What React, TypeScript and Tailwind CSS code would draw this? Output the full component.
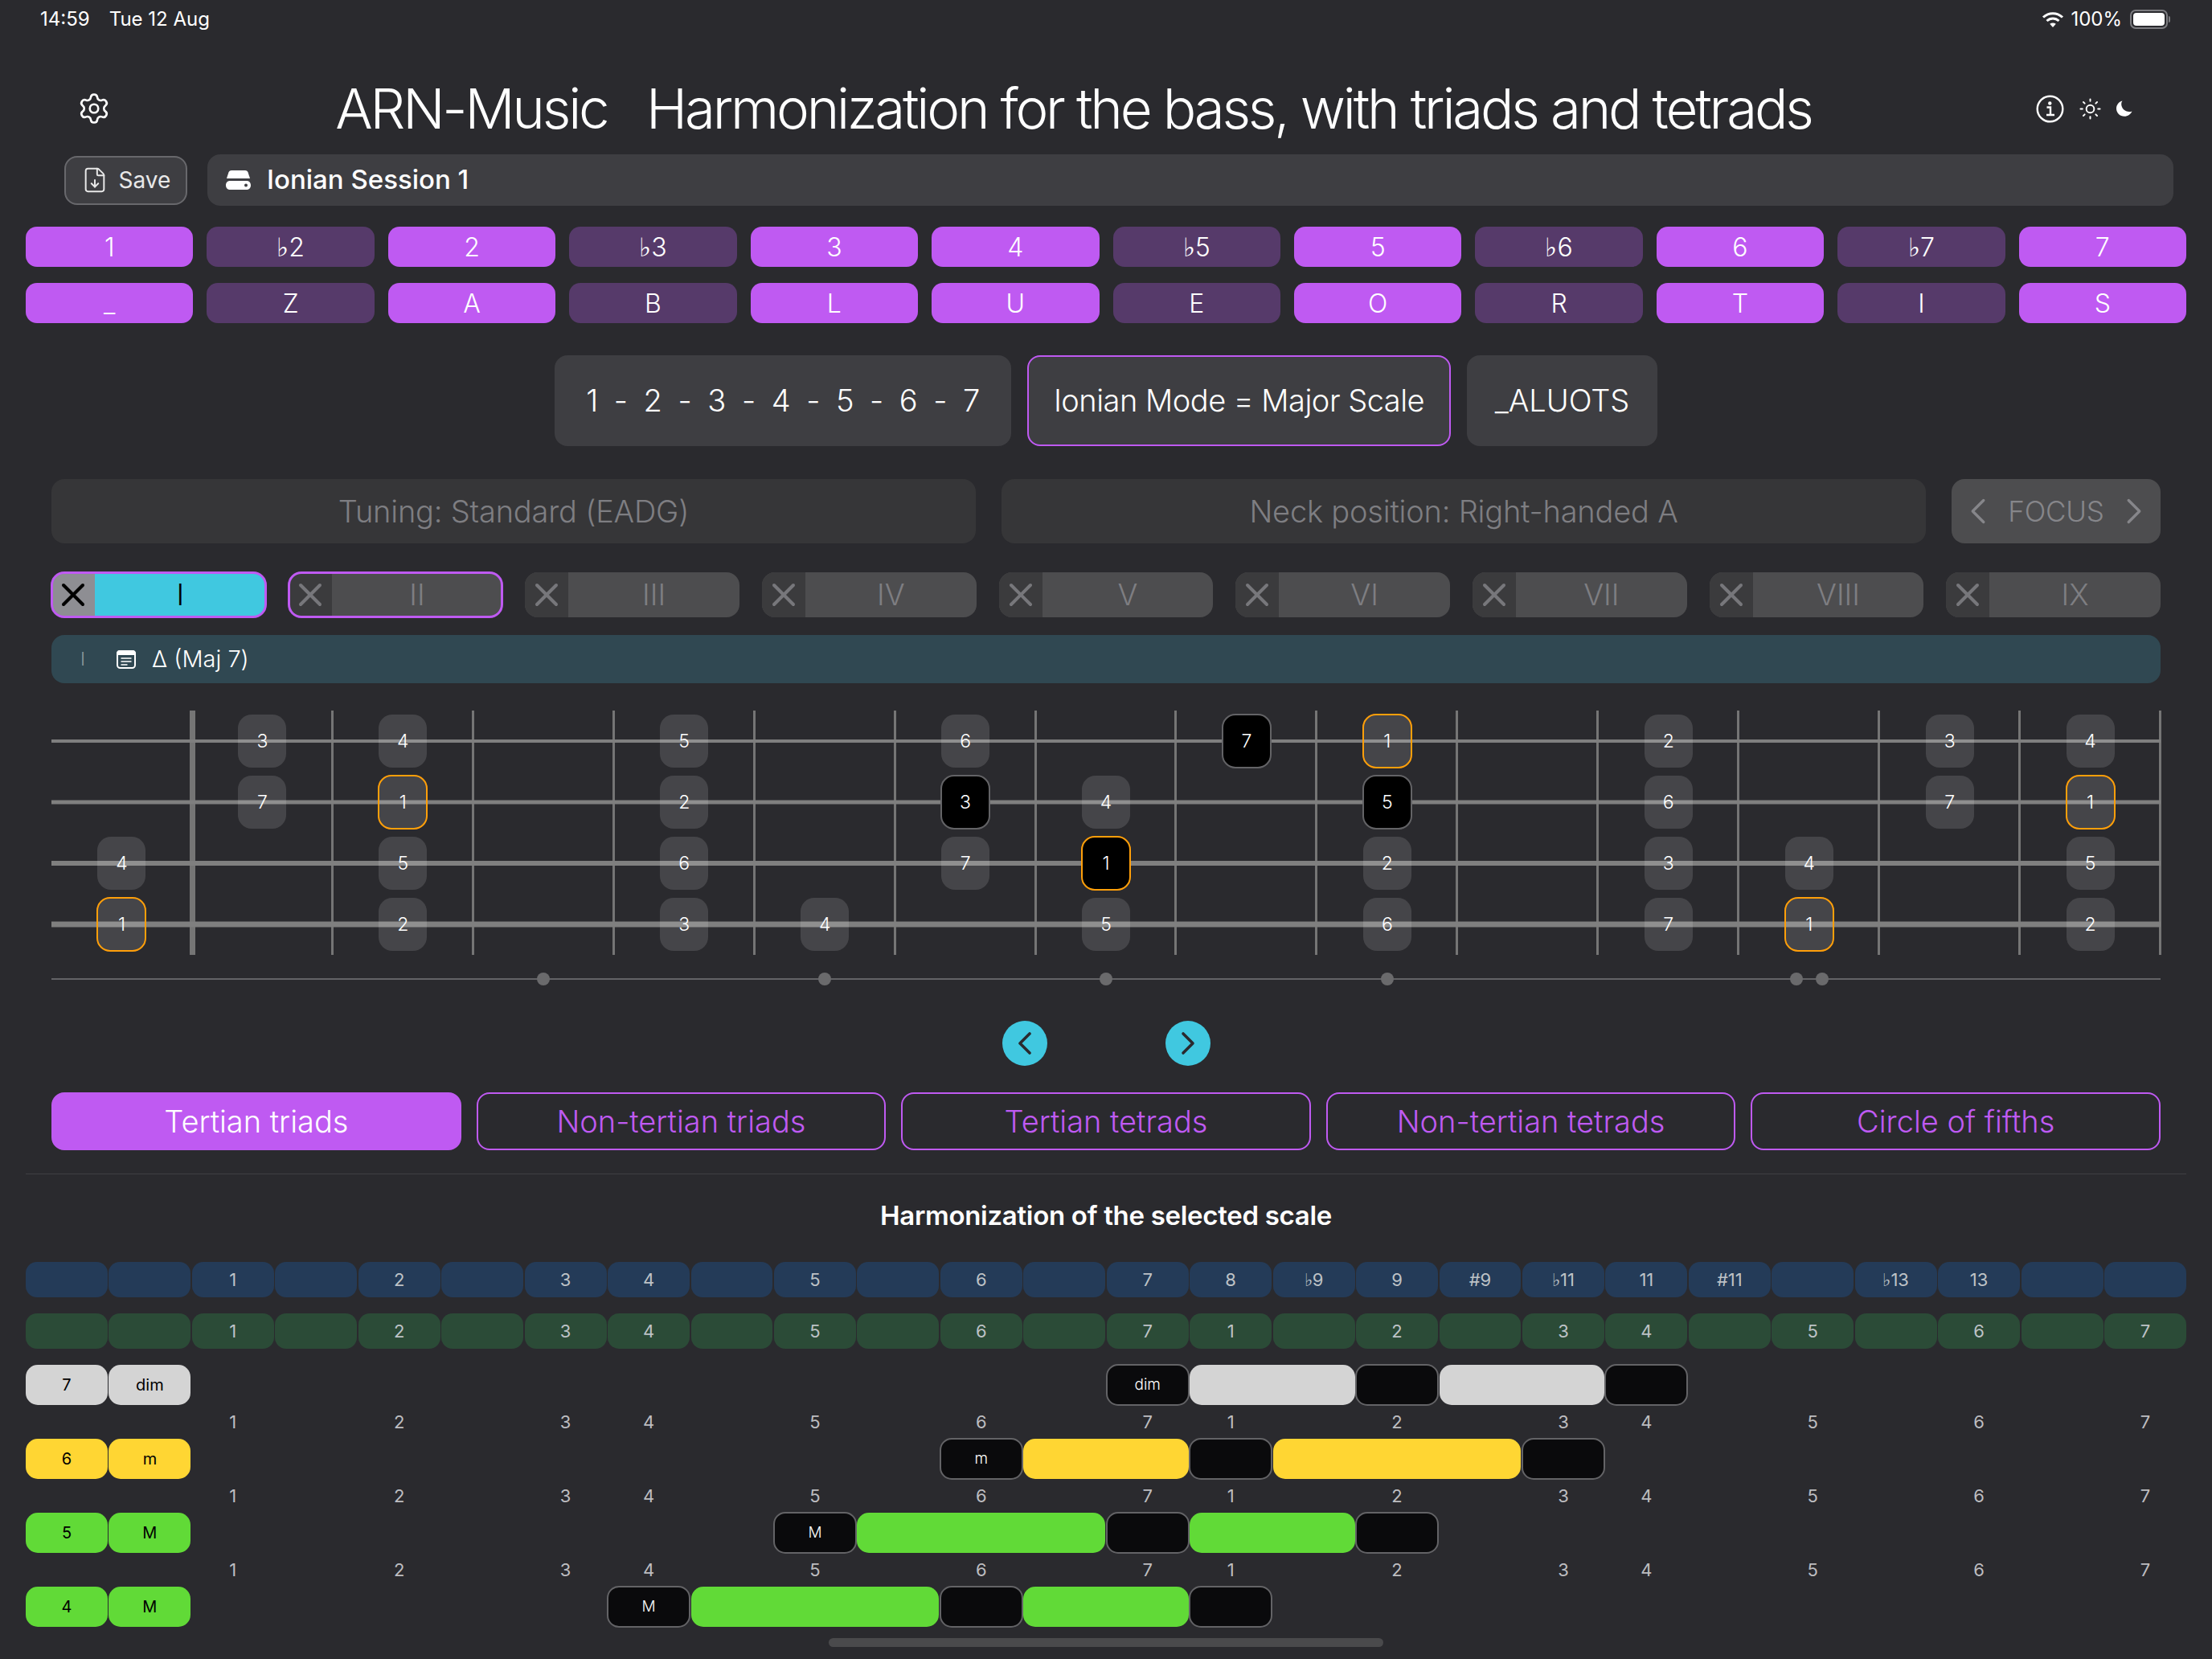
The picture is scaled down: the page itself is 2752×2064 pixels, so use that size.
import { ChevronLeft, ChevronRight, FileDown, Settings, Sun, X } from 'lucide-react';

const degrees = ['1', '♭2', '2', '♭3', '3', '4', '♭5', '5', '♭6', '6', '♭7', '7'];
const letters = ['_', 'Z', 'A', 'B', 'L', 'U', 'E', 'O', 'R', 'T', 'I', 'S'];
const inScale = [0, 2, 4, 5, 7, 9, 11];
const romans = ['I', 'II', 'III', 'IV', 'V', 'VI', 'VII', 'VIII', 'IX'];

type NoteKind = 'plain' | 'black' | 'root' | 'blackRoot';
type Note = [number, string, NoteKind?];

const strings: { line: string; notes: Note[] }[] = [
  {
    line: 'h-[4px]',
    notes: [[1, '3'], [2, '4'], [4, '5'], [6, '6'], [8, '7', 'black'], [9, '1', 'root'], [11, '2'], [13, '3'], [14, '4']],
  },
  {
    line: 'h-[5px]',
    notes: [[1, '7'], [2, '1', 'root'], [4, '2'], [6, '3', 'black'], [7, '4'], [9, '5', 'black'], [11, '6'], [13, '7'], [14, '1', 'root']],
  },
  {
    line: 'h-[6px]',
    notes: [[0, '4'], [2, '5'], [4, '6'], [6, '7'], [7, '1', 'blackRoot'], [9, '2'], [11, '3'], [12, '4'], [14, '5']],
  },
  {
    line: 'h-[7px]',
    notes: [[0, '1', 'root'], [2, '2'], [4, '3'], [5, '4'], [7, '5'], [9, '6'], [11, '7'], [12, '1', 'root'], [14, '2']],
  },
];

const noteClass: Record<NoteKind, string> = {
  plain: 'w-[60px] h-[66px] bg-[#ffffff21]',
  black: 'w-[62px] h-[68px] bg-black border-2 border-[#636366]',
  root: 'w-[62px] h-[68px] bg-[#ffffff21] border-[2.5px] border-[#ff9f0a]',
  blackRoot: 'w-[62px] h-[68px] bg-black border-[2.5px] border-[#ff9f0a]',
};

const harmonyTabs = ['Tertian triads', 'Non-tertian triads', 'Tertian tetrads', 'Non-tertian tetrads', 'Circle of fifths'];

const intervalRow: [number, string][] = [
  [2, '1'], [4, '2'], [6, '3'], [7, '4'], [9, '5'], [11, '6'], [13, '7'], [14, '8'], [15, '♭9'], [16, '9'],
  [17, '#9'], [18, '♭11'], [19, '11'], [20, '#11'], [22, '♭13'], [23, '13'],
];
const degreeRow: [number, string][] = [
  [2, '1'], [4, '2'], [6, '3'], [7, '4'], [9, '5'], [11, '6'], [13, '7'], [14, '1'], [16, '2'], [18, '3'], [19, '4'], [21, '5'], [23, '6'], [25, '7'],
];

type Chord = {
  degree: string;
  quality: string;
  color: string;
  root: number;
  fills: [number, number][];
  darks: number[];
};

const chords: Chord[] = [
  { degree: '7', quality: 'dim', color: 'bg-[#d4d4d4]', root: 13, fills: [[14, 2], [17, 2]], darks: [16, 19] },
  { degree: '6', quality: 'm', color: 'bg-[#ffd633]', root: 11, fills: [[12, 2], [15, 3]], darks: [14, 18] },
  { degree: '5', quality: 'M', color: 'bg-[#61da37]', root: 9, fills: [[10, 3], [14, 2]], darks: [13, 16] },
  { degree: '4', quality: 'M', color: 'bg-[#61da37]', root: 7, fills: [[8, 3], [12, 2]], darks: [11, 14] },
];

function WifiGlyph() {
  return (
    <svg width="28" height="22" viewBox="0 0 28 22" fill="none" stroke="white" strokeWidth="3">
      <path d="M2 8.5C9 2 19 2 26 8.5" />
      <path d="M6.5 13C11 9 17 9 21.500 13" />
      <path d="M14 21l-3.800-4.300c2.200-1.700 5.400-1.700 7.600 0z" fill="white" stroke="none" />
    </svg>
  );
}

function DriveGlyph() {
  return (
    <svg width="31" height="24" viewBox="0 0 31 24" fill="white">
      <path d="M7 0h17c2 0 3 1 3.600 2.500L30 10H1l2.400-7.500C4 1 5 0 7 0z" />
      <path fillRule="evenodd" d="M5 13h21c2.800 0 5 2.200 5 5.500S28.800 24 26 24H5c-2.800 0-5-2.200-5-5.500S2.200 13 5 13zm20 3.500a2 2 0 1 0 0 4 2 2 0 0 0 0-4z" />
    </svg>
  );
}

function NotesGlyph() {
  return (
    <svg width="24" height="23" viewBox="0 0 24 23" fill="none" stroke="white" strokeWidth="2">
      <rect x="1" y="1" width="22" height="21" rx="3.500" />
      <path d="M1 5V4a3 3 0 0 1 3-3h16a3 3 0 0 1 3 3v1z" fill="white" />
      <path d="M5.500 10h13M5.500 14h13M5.500 18h8" strokeWidth="1.700" />
    </svg>
  );
}

function InfoGlyph() {
  return (
    <svg width="35" height="35" viewBox="0 0 35 35" fill="none" stroke="white" strokeWidth="2.400">
      <circle cx="17.500" cy="17.500" r="15.800" />
      <circle cx="17.300" cy="10.500" r="2.200" fill="white" stroke="none" />
      <path d="M13.500 15.500h4.500v9M13 25h10" />
    </svg>
  );
}

function MoonGlyph() {
  return (
    <svg width="20" height="20" viewBox="0 0 20 20" fill="white">
      <path d="M7.500 0.500C3 1.700 0 5.600 0 10c0 5.500 4.500 9.800 10 9.800 4.200 0 8-2.600 9.500-6.300-1 .4-2.200.6-3.400.6C10.500 14.100 6.200 9.700 6.200 4.300c0-1.300.4-2.600 1.300-3.800z" />
    </svg>
  );
}

function Tab({ label, index }: { label: string; index: number }) {
  const selected = index === 0;
  const marked = index < 2;
  return (
    <div
      className={`flex h-[56px] overflow-hidden rounded-[16px] ${marked ? 'outline-[3px] -outline-offset-2 outline-[#bf5af2]' : ''} ${selected ? 'bg-[#40c8e0]' : 'bg-[#4d4d4f]'}`}
    >
      <div className={`flex w-[54px] shrink-0 items-center justify-center ${selected ? 'bg-[#8e8e93] text-black' : 'bg-[#3b3b3d] text-[#77777b]'}`}>
        <X size={48} strokeWidth={2} className="shrink-0" />
      </div>
      <div className={`flex flex-1 items-center justify-center text-[37px] font-light ${selected ? 'text-black' : 'text-[#7e7e82]'}`}>
        {label}
      </div>
    </div>
  );
}

function ChordRow({ chord }: { chord: Chord }) {
  return (
    <div className="grid h-[50px] grid-cols-26 gap-x-[1.5px] text-[20px]">
      <div className={`flex items-center justify-center rounded-[15px] text-black ${chord.color}`}>{chord.degree}</div>
      <div className={`flex items-center justify-center rounded-[15px] text-black ${chord.color}`}>{chord.quality}</div>
      <div
        className="-mx-px -my-px flex items-center justify-center rounded-[15px] border-2 border-[#636366] bg-[#0a0a0c] text-[19px] font-light text-white"
        style={{ gridColumn: chord.root + 1 }}
      >
        {chord.quality}
      </div>
      {chord.fills.map(([start, span]) => (
        <div key={start} className={`rounded-[15px] ${chord.color}`} style={{ gridColumn: `${start + 1} / span ${span}` }} />
      ))}
      {chord.darks.map((col) => (
        <div
          key={col}
          className="-mx-px -my-px rounded-[15px] border-2 border-[#636366] bg-[#0a0a0c]"
          style={{ gridColumn: col + 1, gridRow: 1 }}
        />
      ))}
    </div>
  );
}

function NumberRow() {
  return (
    <div className="grid h-[42px] grid-cols-26 items-center gap-x-[1.5px] text-[22px] text-[#bdbdc0]">
      {degreeRow.map(([col, text]) => (
        <div key={col} className="text-center" style={{ gridColumn: col + 1 }}>
          {text}
        </div>
      ))}
    </div>
  );
}

function HeaderRow({ cells, color }: { cells: [number, string][]; color: string }) {
  return (
    <div className="grid h-[44px] grid-cols-26 gap-x-[1.5px] text-[22px] text-[#bdc2c6]">
      {Array.from({ length: 26 }, (_, col) => {
        const cell = cells.find(([c]) => c === col);
        return (
          <div key={col} className={`flex items-center justify-center rounded-[14px] ${color}`}>
            {cell ? cell[1] : ''}
          </div>
        );
      })}
    </div>
  );
}

export default function App() {
  return (
    <div className="h-[2064px] w-[2752px] overflow-hidden bg-[#2a2a2e] text-white [font-family:Inter,'Noto_Sans',sans-serif]">
      {/* status bar */}
      <div className="flex h-[48px] items-center justify-between pl-[50px] pr-[52px] text-[24px]">
        <div className="flex gap-[24px]">
          <span>14:59</span>
          <span>Tue 12 Aug</span>
        </div>
        <div className="flex items-center gap-[8px]">
          <WifiGlyph />
          <span>100%</span>
          <div className="ml-[2px] flex items-center gap-[1px]">
            <div className="h-[24px] w-[47px] rounded-[7px] border-2 border-[#7c7c80] p-[2px]">
              <div className="h-full w-full rounded-[4px] bg-white" />
            </div>
            <div className="h-[8px] w-[2px] rounded-r-full bg-[#7c7c80]" />
          </div>
        </div>
      </div>

      {/* title */}
      <div className="mt-[42px] flex h-[90px] items-center pl-[96px] pr-[99px]">
        <Settings size={42} strokeWidth={1.5} className="shrink-0" />
        <h1 className="flex-1 pt-[2px] text-center text-[69px] font-[350] tracking-[-3.2px] whitespace-pre">ARN-Music   Harmonization for the bass, with triads and tetrads</h1>
        <div className="flex items-center">
          <InfoGlyph />
          <Sun size={29} strokeWidth={1.6} className="ml-[18px]" />
          <div className="ml-[18px]">
            <MoonGlyph />
          </div>
        </div>
      </div>

      {/* session */}
      <div className="mt-[12px] flex h-[64px] items-center gap-[25px] pl-[80px] pr-[48px]">
        <button className="flex h-[61px] w-[153px] items-center justify-center gap-[13px] rounded-[16px] border-2 border-[#68686c] bg-[#3e3e42] text-[28px] text-[#e8e8e8]">
          <FileDown size={34} strokeWidth={1.4} />
          Save
        </button>
        <div className="flex h-full flex-1 items-center gap-[20px] rounded-[16px] bg-[#3e3e42] pl-[23px] text-[33px] font-medium">
          <DriveGlyph />
          Ionian Session 1
        </div>
      </div>

      {/* notes and letters */}
      <div className="mt-[26px] grid grid-cols-12 gap-x-[17px] gap-y-[20px] px-[32px]">
        {[degrees, letters].map((row) =>
          row.map((text, i) => (
            <div
              key={text + i}
              className={`flex h-[50px] items-center justify-center rounded-[14px] pt-[2px] text-[32px] font-light ${inScale.includes(i) ? 'bg-[#bf5af2]' : 'bg-[#563a6a]'}`}
            >
              {text}
            </div>
          )),
        )}
      </div>

      {/* selected scale */}
      <div className="mt-[40px] flex h-[113px] justify-center gap-[20px] text-[38px] font-light">
        <div className="flex w-[568px] items-center justify-center rounded-[16px] bg-[#3e3e42] tracking-[-0.6px] whitespace-pre">1  -  2  -  3  -  4  -  5  -  6  -  7</div>
        <div className="flex w-[527px] items-center justify-center rounded-[16px] border-2 border-[#bf5af2] bg-[#3e3e42] tracking-[-0.5px]">Ionian Mode = Major Scale</div>
        <div className="flex w-[237px] items-center justify-center rounded-[16px] bg-[#3e3e42]">_ALUOTS</div>
      </div>

      {/* tuning */}
      <div className="mt-[41px] flex h-[80px] gap-[32px] px-[64px] text-[38px] font-light tracking-[-0.2px] text-[#7e7e82]">
        <div className="flex flex-1 items-center justify-center rounded-[16px] bg-[#363638]">Tuning: Standard (EADG)</div>
        <div className="flex flex-1 items-center justify-center rounded-[16px] bg-[#363638]">Neck position: Right-handed A</div>
        <div className="flex w-[260px] items-center justify-between rounded-[16px] bg-[#4d4d4f] px-[6px] text-[35px] text-[#86868a]">
          <ChevronLeft size={54} strokeWidth={1.5} />
          FOCUS
          <ChevronRight size={54} strokeWidth={1.5} />
        </div>
      </div>

      {/* positions */}
      <div className="mt-[36px] grid grid-cols-9 gap-x-[28px] px-[64px]">
        {romans.map((label, i) => (
          <Tab key={label} label={label} index={i} />
        ))}
      </div>

      {/* chord bar */}
      <div className="mx-[64px] mt-[22px] flex h-[60px] items-center rounded-[16px] bg-[#304852] pl-[36px] text-[29px]">
        <span className="w-[45px] text-[23px] font-light text-[#8b979c]">I</span>
        <NotesGlyph />
        <span className="ml-[20px] font-light">Δ (Maj 7)</span>
      </div>

      {/* fretboard */}
      <div className="relative mx-[64px] mt-[34px] h-[304px]">
        <div className="absolute inset-0 grid grid-cols-15">
          {Array.from({ length: 15 }, (_, i) => (
            <div key={i} className={`border-[#757575] ${i === 0 ? 'translate-x-[4px] border-r-[7px]' : 'translate-x-px border-r-[3px]'}`} />
          ))}
        </div>
        {strings.map((string, s) => (
          <div key={s} className="relative grid h-[76px] grid-cols-15 items-center justify-items-center">
            <div className={`absolute inset-x-0 top-1/2 -translate-y-1/2 bg-[#7f7f7f] ${string.line}`} />
            {string.notes.map(([col, text, kind = 'plain']) => (
              <div
                key={col}
                className={`relative flex items-center justify-center rounded-[17px] text-[23px] font-light ${noteClass[kind]}`}
                style={{ gridColumn: col + 1, gridRow: 1 }}
              >
                {text}
              </div>
            ))}
          </div>
        ))}
      </div>

      {/* fret markers */}
      <div className="relative mx-[64px] mt-[22px] grid h-[16px] grid-cols-15 justify-items-center">
        <div className="absolute inset-x-0 top-1/2 h-[2px] -translate-y-1/2 bg-[#636366]" />
        {[3, 5, 7, 9, 12].map((col) => (
          <div key={col} className="relative flex gap-[16px]" style={{ gridColumn: col + 1, gridRow: 1 }}>
            <div className="h-[16px] w-[16px] rounded-full bg-[#6a6a6c]" />
            {col === 12 && <div className="h-[16px] w-[16px] rounded-full bg-[#6a6a6c]" />}
          </div>
        ))}
      </div>

      {/* prev / next */}
      <div className="mt-[44px] flex justify-center gap-[147px]">
        {[ChevronLeft, ChevronRight].map((Icon, i) => (
          <div key={i} className="flex h-[56px] w-[56px] items-center justify-center rounded-full bg-[#40c8e0] text-[#2a2a2e]">
            <Icon size={48} strokeWidth={1.8} className="shrink-0" />
          </div>
        ))}
      </div>

      {/* harmonization tabs */}
      <div className="mt-[33px] grid h-[72px] grid-cols-5 gap-x-[19px] px-[64px] text-[38px] font-light">
        {harmonyTabs.map((label, i) => (
          <div
            key={label}
            className={`flex items-center justify-center rounded-[16px] border-2 border-[#bf5af2] ${i === 0 ? 'bg-[#bf5af2] text-white' : 'text-[#bf5af2]'}`}
          >
            {label}
          </div>
        ))}
      </div>

      <div className="mx-[32px] mt-[29px] h-px bg-[#3f3f43]" />

      <h2 className="mt-[27px] flex h-[50px] items-center justify-center text-[33px] font-semibold tracking-[-0.3px]">Harmonization of the selected scale</h2>

      {/* harmonization table */}
      <div className="mt-[32px] px-[32px]">
        <HeaderRow cells={intervalRow} color="bg-[#243b58]" />
        <div className="mt-[20px]">
          <HeaderRow cells={degreeRow} color="bg-[#2b4b37]" />
        </div>
        <div className="mt-[20px]">
          {chords.map((chord, i) => (
            <div key={chord.degree}>
              <ChordRow chord={chord} />
              {i < chords.length - 1 && <NumberRow />}
            </div>
          ))}
        </div>
      </div>

      {/* home indicator */}
      <div className="mx-auto mt-[14px] h-[11px] w-[690px] rounded-full bg-[#4a4a4c]" />
    </div>
  );
}
